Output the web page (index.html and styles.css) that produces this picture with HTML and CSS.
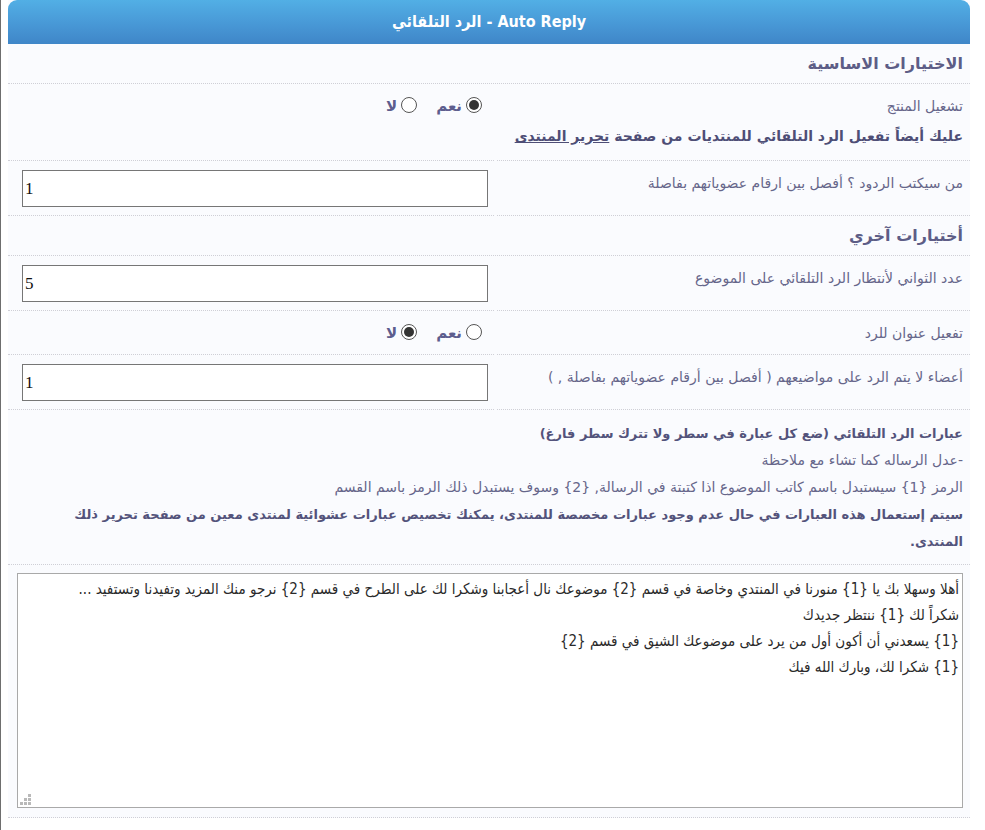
FILE: index.html
```html
<!DOCTYPE html>
<html lang="ar" dir="rtl">
<head>
<meta charset="utf-8">
<title>Auto Reply</title>
<link rel="stylesheet" href="styles.css">
</head>
<body>
<div class="frame">
  <div class="panel">
    <div class="panel-head">Auto Reply - الرد التلقائي</div>

    <div class="row full"><div class="cell heading">الاختيارات الاساسية</div></div>

    <div class="row">
      <div class="cell label">
        <div>تشغيل المنتج</div>
        <div class="note">عليك أيضاً تفعيل الرد التلقائي للمنتديات من صفحة <a href="#">تحرير المنتدى</a></div>
      </div>
      <div class="cell field radios">
        <label class="opt"><span class="radio on"></span><span>نعم</span></label>
        <label class="opt"><span class="radio"></span><span>لا</span></label>
      </div>
    </div>

    <div class="row">
      <div class="cell label">من سيكتب الردود ؟ أفصل بين ارقام عضوياتهم بفاصلة</div>
      <div class="cell field"><input class="text" type="text" value="1" dir="ltr"></div>
    </div>

    <div class="row full"><div class="cell heading">أختيارات آخري</div></div>

    <div class="row">
      <div class="cell label">عدد الثواني لأنتظار الرد التلقائي على الموضوع</div>
      <div class="cell field"><input class="text" type="text" value="5" dir="ltr"></div>
    </div>

    <div class="row">
      <div class="cell label">تفعيل عنوان للرد</div>
      <div class="cell field radios">
        <label class="opt"><span class="radio"></span><span>نعم</span></label>
        <label class="opt"><span class="radio on"></span><span>لا</span></label>
      </div>
    </div>

    <div class="row">
      <div class="cell label">أعضاء لا يتم الرد على مواضيعهم ( أفصل بين أرقام عضوياتهم بفاصلة , )</div>
      <div class="cell field"><input class="text" type="text" value="1" dir="ltr"></div>
    </div>

    <div class="row full">
      <div class="cell info">
        <div class="b">عبارات الرد التلقائي (ضع كل عبارة في سطر ولا تترك سطر فارغ)</div>
        <div>-عدل الرساله كما تشاء مع ملاحظة</div>
        <div>الرمز {1} سيستبدل باسم كاتب الموضوع اذا كتبتة في الرسالة, {2} وسوف يستبدل ذلك الرمز باسم القسم</div>
        <div class="b">سيتم إستعمال هذه العبارات في حال عدم وجود عبارات مخصصة للمنتدى، يمكنك تخصيص عبارات عشوائية لمنتدى معين من صفحة تحرير ذلك المنتدى.</div>
      </div>
    </div>

    <div class="row full">
      <div class="cell area-cell">
        <div class="area-wrap">
<textarea class="area">أهلا وسهلا بك يا {1} منورنا في المنتدي وخاصة في قسم {2} موضوعك نال أعجابنا وشكرا لك على الطرح في قسم {2} نرجو منك المزيد وتفيدنا وتستفيد ...
شكراً لك {1} ننتظر جديدك
{1} يسعدني أن أكون أول من يرد على موضوعك الشيق في قسم {2}
{1} شكرا لك، وبارك الله فيك</textarea>
          <span class="grip"><i></i><i></i><i></i><i></i><i></i><i></i></span>
        </div>
      </div>
    </div>
  </div>
</div>
</body>
</html>
```

FILE: styles.css
```css
html, body {
  margin: 0;
  padding: 0;
  background: #ffffff;
}
body {
  font-family: "DejaVu Sans", sans-serif;
  font-size: 14px;
  color: #66668a;
}
.frame {
  min-height: 830px;
  padding-left: 8px;
  direction: ltr;
  border-left: 1px solid #6e6e6e;
  box-sizing: border-box;
}
.frame > .panel {
  margin-left: -1px;
}
.panel {
  width: 962px;
  direction: rtl;
  background: #fafbfe;
}
.panel-head {
  height: 44px;
  line-height: 44px;
  border-radius: 9px 9px 0 0;
  background: linear-gradient(to bottom, #52afe5 0%, #4898d6 55%, #3f86c8 100%);
  color: #ffffff;
  text-align: center;
  font-family: "DejaVu Sans Condensed", "DejaVu Sans", sans-serif;
  font-stretch: condensed;
  font-weight: bold;
  font-size: 16px;
}
.row {
  display: grid;
  grid-template-columns: 473px 486px;
  column-gap: 3px;
}
.row.full {
  grid-template-columns: 1fr;
}
.cell {
  border-bottom: 1px dotted #cfcfd6;
  box-sizing: border-box;
}
.heading {
  padding: 7px 7px 6px;
  line-height: 26px;
  font-size: 16px;
  font-weight: bold;
  color: #5d5d86;
}
.label {
  padding: 8px 7px 7px;
  line-height: 28px;
  font-size: 14px;
}
.note {
  font-weight: bold;
  color: #4e4e76;
  line-height: 32px;
  padding-bottom: 1px;
}
.note a {
  color: #4e4e76;
  text-decoration: underline;
}
.field {
  padding: 9px 6px 8px 13px;
}
.text {
  display: block;
  width: 466px;
  height: 37px;
  box-sizing: border-box;
  border: 1px solid #767676;
  background: #ffffff;
  font-family: "Liberation Serif", serif;
  font-size: 17px;
  color: #111;
  padding: 0 2px;
  margin: 0;
}
.radios {
  display: flex;
  align-items: flex-start;
  gap: 19px;
  padding: 8px 12px 7px 12px;
}
.opt {
  display: flex;
  align-items: center;
  gap: 4px;
  height: 28px;
  font-weight: bold;
  font-size: 15px;
  color: #5d5d8e;
}
.radio {
  width: 14px;
  height: 14px;
  border: 1px solid #555;
  border-radius: 50%;
  background: #fff;
  display: flex;
  align-items: center;
  justify-content: center;
  margin-top: -3px;
}
.radio.on::after {
  content: "";
  width: 10px;
  height: 10px;
  border-radius: 50%;
  background: #333;
}
.info {
  padding: 10px 7px 9px 20px;
  line-height: 27px;
  font-size: 14px;
}
.info .b {
  font-weight: bold;
  font-size: 13px;
  color: #53537b;
}
.area-cell {
  padding: 8px 7px 9px 8px;
}
.area-wrap {
  position: relative;
  width: 946px;
  height: 235px;
}
.area {
  display: block;
  width: 946px;
  height: 235px;
  box-sizing: border-box;
  border: 1px solid #a9a9a9;
  background: #ffffff;
  resize: none;
  margin: 0;
  padding: 2px 3px;
  font-family: "DejaVu Sans Condensed", "DejaVu Sans", sans-serif;
  font-stretch: condensed;
  font-size: 15px;
  line-height: 26px;
  color: #2a2a2a;
}
.grip {
  position: absolute;
  left: 3px;
  bottom: 3px;
  width: 11px;
  height: 11px;
  display: grid;
  grid-template-columns: repeat(3, 3px);
  grid-template-rows: repeat(3, 3px);
  gap: 1px;
}
.grip i {
  display: block;
  background: #b9b9b9;
}
.grip i:nth-child(1) { grid-column: 1; grid-row: 1; }
.grip i:nth-child(2) { grid-column: 1; grid-row: 2; }
.grip i:nth-child(3) { grid-column: 2; grid-row: 2; }
.grip i:nth-child(4) { grid-column: 1; grid-row: 3; }
.grip i:nth-child(5) { grid-column: 2; grid-row: 3; }
.grip i:nth-child(6) { grid-column: 3; grid-row: 3; }
```
